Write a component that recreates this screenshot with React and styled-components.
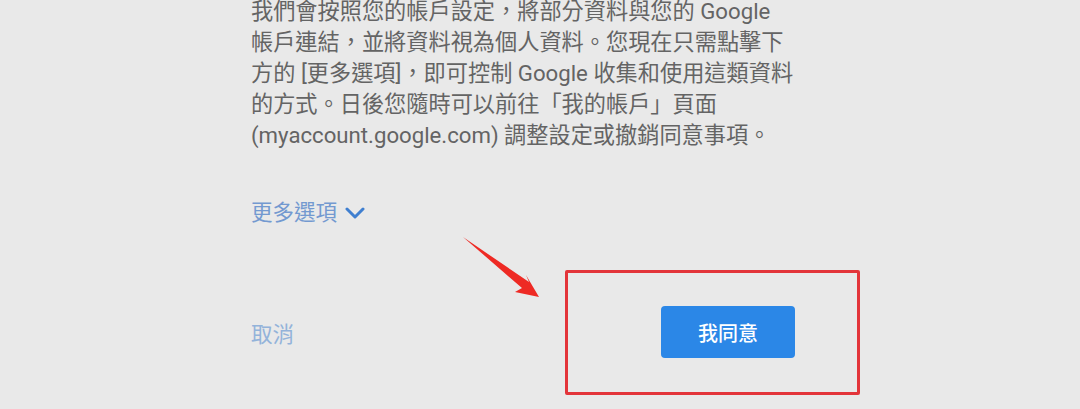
import React from "react";
import styled, { createGlobalStyle } from "styled-components";

const Global = createGlobalStyle`
  html, body { margin: 0; padding: 0; background: #e9e9e9; }
  body { font-family: Roboto, "Noto Sans CJK TC", sans-serif; }
`;

const Page = styled.div`
  position: relative;
  width: 1080px;
  height: 409px;
  overflow: hidden;
  background: #e9e9e9;
  box-sizing: border-box;
  padding-left: 251px;
`;

const Column = styled.div`
  width: 544px;
  display: flex;
  flex-direction: column;
`;

const Body = styled.p`
  margin: -4px 0 0 0;
  font-size: 22.2px;
  line-height: 31px;
  color: #646464;
  white-space: nowrap;
`;

const MoreLink = styled.div`
  margin-top: 47px;
  display: flex;
  align-items: center;
  gap: 8px;
  font-size: 21.5px;
  line-height: 30px;
  color: #7399d0;
`;

const Footer = styled.div`
  margin-top: 78px;
  display: flex;
  align-items: center;
  justify-content: space-between;
`;

const Cancel = styled.span`
  font-size: 21.5px;
  color: #93b3da;
`;

const AgreeButton = styled.button`
  width: 134px;
  height: 52px;
  border: none;
  border-radius: 4px;
  background: #2b87e7;
  color: #fff;
  font-family: "Noto Sans CJK TC", sans-serif;
  font-size: 20px;
  font-weight: 500;
  padding: 0;
`;

const Highlight = styled.div`
  position: absolute;
  left: 565px;
  top: 270px;
  width: 295px;
  height: 125px;
  box-sizing: border-box;
  border: 3px solid #e3353a;
  border-radius: 2px;
`;

const Arrow = styled.svg`
  position: absolute;
  left: 455px;
  top: 230px;
`;

export default function App() {
  return (
    <>
      <Global />
      <Page>
        <Column>
          <Body>
            我們會按照您的帳戶設定，將部分資料與您的 Google
            <br />
            帳戶連結，並將資料視為個人資料。您現在只需點擊下
            <br />
            方的 [更多選項]，即可控制 Google 收集和使用這類資料
            <br />
            的方式。日後您隨時可以前往「我的帳戶」頁面
            <br />
            (myaccount.google.com) 調整設定或撤銷同意事項。
          </Body>
          <MoreLink>
            更多選項
            <svg width="20" height="14" viewBox="0 0 20 14">
              <path d="M2 3 L10 11 L18 3" fill="none" stroke="#3f7fd0" strokeWidth="3" strokeLinecap="round" strokeLinejoin="round" />
            </svg>
          </MoreLink>
          <Footer>
            <Cancel>取消</Cancel>
            <AgreeButton>我同意</AgreeButton>
          </Footer>
        </Column>
        <Arrow width="100" height="80" viewBox="0 0 100 80">
          <path d="M8 7 L74 52 L71 45 L84 67 L60 62 L67 58 Z" fill="#ee2a24" />
        </Arrow>
        <Highlight />
      </Page>
    </>
  );
}
